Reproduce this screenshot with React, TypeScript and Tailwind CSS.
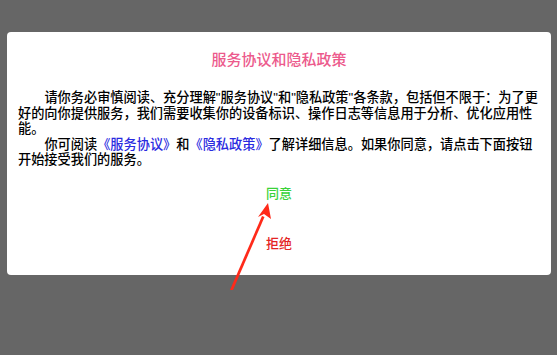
import React from 'react'

const font = { fontFamily: '"Liberation Sans", "Noto Sans CJK SC", sans-serif' }

export default function App() {
  return (
    <div
      className="relative h-[355px] w-[557px] overflow-hidden bg-[#666666] pt-[32px] pl-[7px]"
      style={font}
    >
      <div className="flex h-[243px] w-[544px] flex-col items-center rounded-[4px] bg-white pt-[18px]">
        <h1 className="text-[15px] leading-[20px] font-medium text-[#ec5a8c]">服务协议和隐私政策</h1>
        <div className="mt-[20px] w-[522px] text-[13.2px] leading-[15.5px] font-medium text-black [text-spacing-trim:space-all]">
          <p className="indent-[2em]">
            请你务必审慎阅读、充分理解"服务协议"和"隐私政策"各条款，包括但不限于：为了更好的向你提供服务，我们需要收集你的设备标识、操作日志等信息用于分析、优化应用性能。
          </p>
          <p className="indent-[2em]">
            你可阅读<span className="text-[#2a2ae0]">《服务协议》</span>和<span className="text-[#2a2ae0]">《隐私政策》</span>了解详细信息。如果你同意，请点击下面按钮开始接受我们的服务。
          </p>
        </div>
        <button className="mt-[17px] text-[13px] leading-[18px] font-medium text-[#3ad23a]">同意</button>
        <button className="mt-[32px] text-[13px] leading-[18px] font-medium text-[#e42424]">拒绝</button>
      </div>

      {/* annotation arrow */}
      <svg className="absolute top-0 left-0" width="557" height="355" viewBox="0 0 557 355">
        <path d="M230 290 L262 216 L264.5 217 L233 290 Z" fill="#ff2a1a" />
        <path d="M268 203 L258 217 L264 214 L271 219 Z" fill="#ff2a1a" />
      </svg>
    </div>
  )
}
